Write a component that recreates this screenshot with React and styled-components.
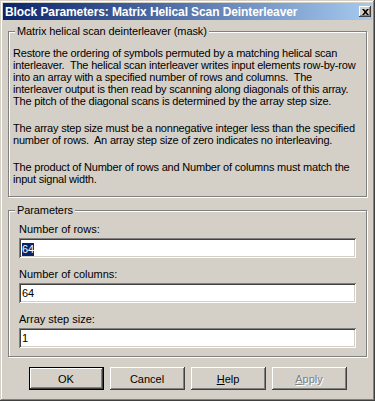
import React from 'react'
import styled, { createGlobalStyle } from 'styled-components'

const GlobalStyle = createGlobalStyle`
  html, body {
    margin: 0;
    padding: 0;
    background: #d4d0c8;
  }
  body {
    font-family: "Liberation Sans", Arial, sans-serif;
    font-size: 11px;
    color: #000;
  }
`

const Window = styled.div`
  width: 375px;
  height: 401px;
  box-sizing: border-box;
  padding: 3px;
  background: #d4d0c8;
  box-shadow: inset -1px -1px #404040, inset 1px 1px #d4d0c8,
    inset -2px -2px #808080, inset 2px 2px #fff;
  display: flex;
  flex-direction: column;
`

const TitleBar = styled.div`
  height: 17px;
  display: flex;
  align-items: center;
  justify-content: space-between;
  padding: 0 1px 0 2px;
  background: linear-gradient(to right, #0a246a, #a6caf0);
`

const Title = styled.span`
  color: #fff;
  font-weight: bold;
  font-size: 12px;
  letter-spacing: -0.1px;
  white-space: nowrap;
`

const CloseButton = styled.div`
  width: 12px;
  height: 11px;
  box-sizing: border-box;
  background: #d4d0c8;
  box-shadow: inset -1px -1px #404040, inset 1px 1px #fff,
    inset -2px -2px #808080;
  display: flex;
  align-items: center;
  justify-content: center;
`

const Content = styled.div`
  padding: 11px 5px 0 5px;
  display: flex;
  flex-direction: column;
`

const GroupBox = styled.div`
  position: relative;
  border: 1px solid #808080;
  box-shadow: inset 1px 1px #fff, 1px 1px #fff;
  padding: ${p => p.$pad};
  margin-top: ${p => p.$top || 0}px;
`

const Legend = styled.span`
  position: absolute;
  top: -7px;
  left: 6px;
  padding: 0 2px;
  line-height: 13px;
  background: #d4d0c8;
  white-space: nowrap;
  letter-spacing: -0.1px;
`

const Para = styled.div`
  & + & {
    margin-top: 15px;
  }
`

const Line = styled.div`
  line-height: 12px;
  white-space: pre;
  letter-spacing: -0.2px;
`

const Label = styled.div`
  line-height: 14px;
  margin-bottom: 2px;
  white-space: nowrap;
`

const Field = styled.div`
  height: 20px;
  box-sizing: border-box;
  padding-left: 3px;
  background: #fff;
  line-height: 20px;
  box-shadow: inset 1px 1px #808080, inset -1px -1px #fff,
    inset 2px 2px #404040, inset -2px -2px #d4d0c8;
  margin-bottom: ${p => (p.$last ? 0 : 9)}px;
`

const Selected = styled.span`
  display: inline-block;
  line-height: 13px;
  background: #0a246a;
  color: #fff;
  vertical-align: middle;
`

const ButtonRow = styled.div`
  display: flex;
  justify-content: center;
  gap: 6px;
  margin-top: 10px;
`

const Button = styled.div`
  width: 75px;
  height: 23px;
  box-sizing: border-box;
  border: ${p => (p.$default ? '1px solid #000' : 'none')};
  background: #d4d0c8;
  box-shadow: inset -1px -1px #404040, inset 1px 1px #fff,
    inset -2px -2px #808080, inset 2px 2px #d4d0c8;
  display: flex;
  align-items: center;
  justify-content: center;
  color: ${p => (p.$disabled ? '#808080' : '#000')};
  text-shadow: ${p => (p.$disabled ? '1px 1px 0 #fff' : 'none')};
  u {
    text-decoration: underline;
  }
`

const description = [
  [
    'Restore the ordering of symbols permuted by a matching helical scan',
    'interleaver.  The helical scan interleaver writes input elements row-by-row',
    'into an array with a specified number of rows and columns.  The',
    'interleaver output is then read by scanning along diagonals of this array.',
    'The pitch of the diagonal scans is determined by the array step size.',
  ],
  [
    'The array step size must be a nonnegative integer less than the specified',
    'number of rows.  An array step size of zero indicates no interleaving.',
  ],
  [
    'The product of Number of rows and Number of columns must match the',
    'input signal width.',
  ],
]

const params = [
  { label: 'Number of rows:', value: '64', selected: true },
  { label: 'Number of columns:', value: '64' },
  { label: 'Array step size:', value: '1' },
]

const App = () => (
  <>
    <GlobalStyle />
    <Window>
      <TitleBar>
        <Title>Block Parameters: Matrix Helical Scan Deinterleaver</Title>
        <CloseButton>
          <svg width="7" height="6" viewBox="0 0 7 6">
            <path
              d="M0 0h2l1.5 1.8L5 0h2L4.5 3 7 6H5L3.5 4.2 2 6H0l2.5-3z"
              fill="#000"
            />
          </svg>
        </CloseButton>
      </TitleBar>
      <Content>
        <GroupBox $pad="15px 4px 11px 4px">
          <Legend>Matrix helical scan deinterleaver (mask)</Legend>
          {description.map((lines, i) => (
            <Para key={i}>
              {lines.map(line => (
                <Line key={line}>{line}</Line>
              ))}
            </Para>
          ))}
        </GroupBox>
        <GroupBox $pad="11px 10px 8px 10px" $top={13}>
          <Legend>Parameters</Legend>
          {params.map((p, i) => (
            <div key={p.label}>
              <Label>{p.label}</Label>
              <Field $last={i === params.length - 1}>
                {p.selected ? <Selected>{p.value}</Selected> : p.value}
              </Field>
            </div>
          ))}
        </GroupBox>
        <ButtonRow>
          <Button $default>OK</Button>
          <Button>Cancel</Button>
          <Button>
            <u>H</u>elp
          </Button>
          <Button $disabled>
            <u>A</u>pply
          </Button>
        </ButtonRow>
      </Content>
    </Window>
  </>
)

export default App
